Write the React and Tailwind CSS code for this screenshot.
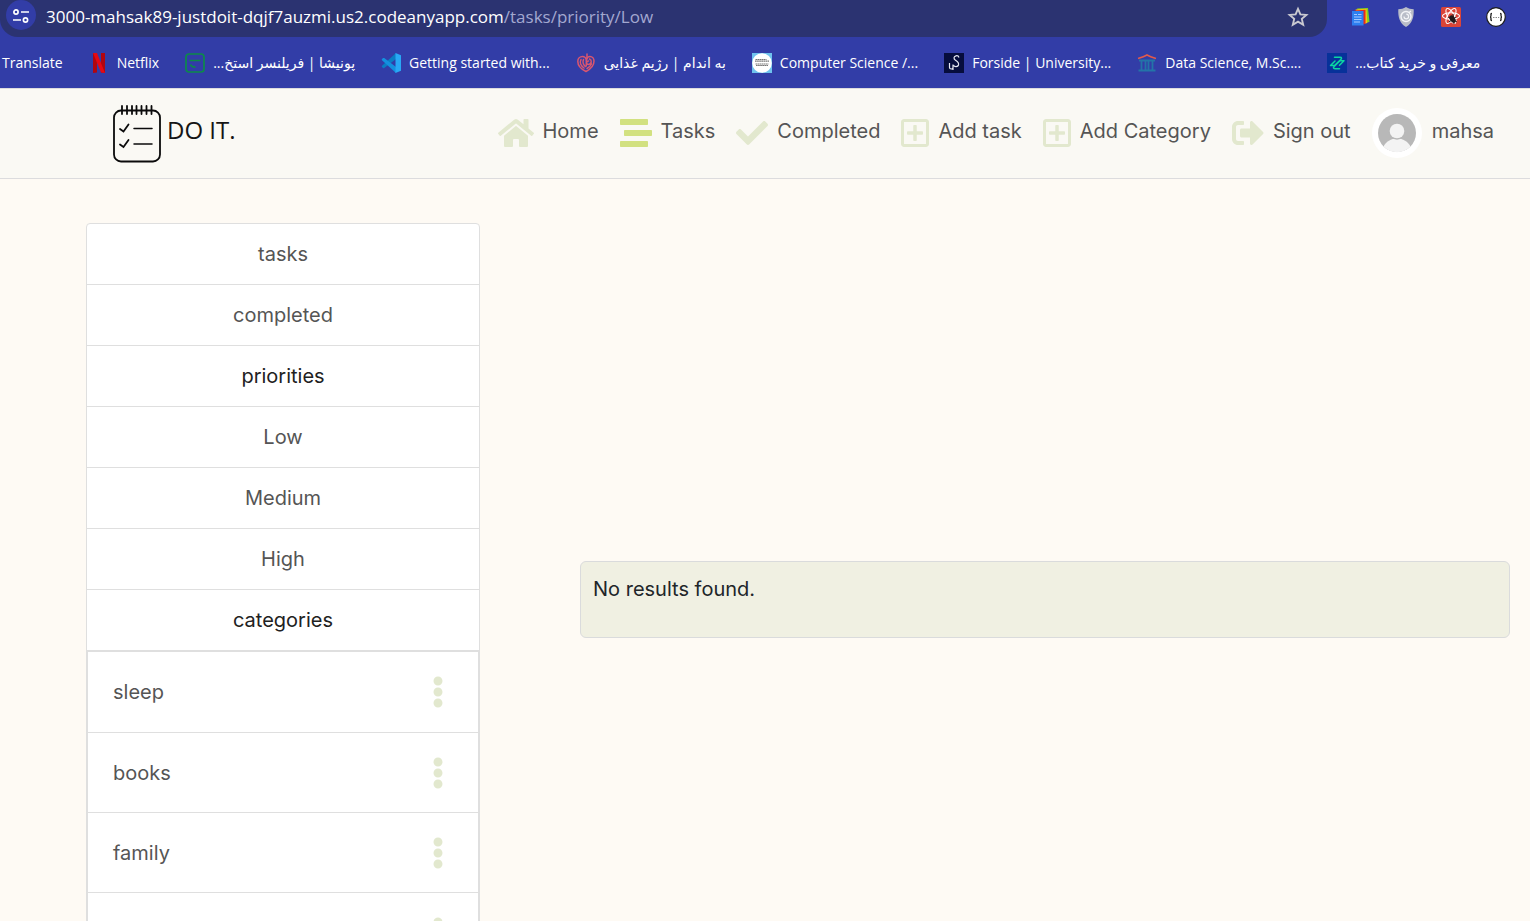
import React from "react";
import {
  FaHome,
  FaStream,
  FaCheck,
  FaRegPlusSquare,
  FaSignOutAlt,
  FaEllipsisV,
} from "react-icons/fa";

function NetflixIcon() {
  return (
    <svg viewBox="0 0 20 20" className="size-5 shrink-0" aria-hidden="true">
      <path d="M4 0h4v19.4L4 20zM12 0h4v20l-4-.6z" fill="#b1060f" />
      <path d="M4 0h4l8 20-4-.6z" fill="#e50914" />
    </svg>
  );
}

function PonishaIcon() {
  return (
    <svg viewBox="0 0 20 20" className="size-5 shrink-0" aria-hidden="true" fill="none" stroke="#0c8a4a" strokeWidth="1.7">
      <rect x="1" y="1" width="18" height="18" rx="3" />
      <path d="M4.5 7.5h11M5.500 11.500c.5 1.700 2 2.500 5 2.500" />
    </svg>
  );
}

function CodeIcon() {
  return (
    <svg viewBox="0 0 20 20" className="size-5 shrink-0" aria-hidden="true">
      <path d="M15 0 1 12.700c-.4.4-.4.9 0 1.200l1.100 1c.3.3.8.3 1.100 0L15 6z" fill="#0a7dc4" />
      <path d="M15 20 1 7.300c-.4-.4-.4-.9 0-1.200l1.100-1c.3-.3.8-.3 1.100 0L15 14z" fill="#1490df" />
      <path d="M14.500 0 20 2.300v15.400L14.500 20z" fill="#29a8f5" />
    </svg>
  );
}

function HeartIcon() {
  return (
    <svg viewBox="0 0 20 20" className="size-5 shrink-0" aria-hidden="true" fill="none" stroke="#d9566f" strokeWidth="1.5" strokeLinecap="round">
      <path d="M10 18.500C5 16 1.800 12.500 1.800 8.500 1.800 5.500 4 3.500 6.500 3.500c2 0 3.200 1 3.800 3 .7-2 2-3 3.700-3 2.300 0 4 2 4 4.600 0 4.400-3 7.900-8 10.400z" />
      <path d="M11 1v5M5 6.500c-1.500 3 0 6.500 3 8.500M7.500 6.500c-1 2.500-.5 5 1.800 7M13.500 6c2.500 1 2.500 5-1 5.500-2.500 0-2.500-3.500 0-3.500M10.300 7v6M15.500 11c-1 2-2.500 3.500-4.500 4.500" />
    </svg>
  );
}

function StudyIcon() {
  return (
    <svg viewBox="0 0 20 20" className="size-5 shrink-0" aria-hidden="true">
      <path d="M0 0h20v20H0z" fill="#6fc2ee" />
      <circle cx="10" cy="10" r="9.800" fill="#fff" />
      <path d="M3.500 6.500h11M3 8.200h14M3.500 11h13M4 12.500h12" stroke="#777" strokeWidth="1.200" strokeDasharray="1.700 .4" />
    </svg>
  );
}

function ForsideIcon() {
  return (
    <svg viewBox="0 0 20 20" className="size-5 shrink-0" aria-hidden="true">
      <path d="M0 0h20v20H0z" fill="#060d3c" />
      <path d="M15 4.500c-.5-1.500-1.800-2-3-1.700-2.500.6-2.600 3-.5 4.400 2.500 1.500 3.500 2.800 3 4.800-.6 2-4 2.200-5 .3M5.500 10v4.500c0 2 3.500 2 3.500 0V11.500v5.500" fill="none" stroke="#e8eaf3" strokeWidth="1.200" />
    </svg>
  );
}

function TempleIcon() {
  return (
    <svg viewBox="0 0 20 20" className="size-5 shrink-0" aria-hidden="true" fill="none">
      <path d="M1 5.500C4.500 4.500 7.500 3.500 10 2c2.500 1.500 5.500 2.500 9 3.500" stroke="#e25a4b" strokeWidth="1.600" />
      <path d="M2 7.500h16M4.500 8v9M8.500 8v9M11.500 8v9M15.500 8v9M1.500 17.500h17" stroke="#2374a8" strokeWidth="1.800" />
    </svg>
  );
}

function BookIcon() {
  return (
    <svg viewBox="0 0 20 20" className="size-5 shrink-0" aria-hidden="true">
      <path d="M0 0h20v20H0z" fill="#07319a" />
      <path d="M7.500 4.300h5.500c2 0 1.800 1.300.8 2.200L7.500 12.500H3.500l4.500-4.500M12.500 15.700H8c-2 0-1.800-1.300-.8-2.200l5.800-5.700H17l-4.500 4.500" fill="none" stroke="#0bd6a1" strokeWidth="1.500" strokeLinejoin="round" strokeLinecap="round" />
    </svg>
  );
}

const bookmarks = [
  { label: "Netflix", Icon: NetflixIcon },
  { label: "پونیشا | فریلنسر استخ...", Icon: PonishaIcon, rtl: true },
  { label: "Getting started with...", Icon: CodeIcon },
  { label: "به اندام | رژیم غذایی", Icon: HeartIcon, rtl: true },
  { label: "Computer Science /...", Icon: StudyIcon },
  { label: "Forside | University...", Icon: ForsideIcon },
  { label: "Data Science, M.Sc....", Icon: TempleIcon },
  { label: "معرفی و خرید کتاب...", Icon: BookIcon, rtl: true },
];

function Extensions() {
  return (
    <div className="flex h-[33px] shrink-0 items-center gap-[25px] pr-6 pl-6">
      <button type="button" aria-label="Documents">
        <svg viewBox="0 0 20 20" className="size-5">
          <path d="M6 1.500 17 1l1.500 14-5 1z" fill="#7ed321" />
          <path d="m4.500 2.500 11-.8.8 14.300-4 1z" fill="#fbc50b" />
          <path d="m3.500 3.500 11-.8v14l-4 1z" fill="#e32b22" />
          <path d="M1 4h11.500v14.500H1z" fill="#2d7ff0" />
          <path d="M3 7.500h3M7 7.500h3.500M3 10h7.500M3 12.500h7.500M3 15h6" stroke="#a3c8ff" strokeWidth="1.100" />
        </svg>
      </button>
      <button type="button" aria-label="Shield">
        <svg viewBox="0 0 20 20" className="size-5">
          <path d="M10 0c2.500 1.700 5 2 7.700 2.200C18 10 16.500 16 10 20 3.500 16 2 10 2.300 2.200 5 2 7.500 1.700 10 0z" fill="#b9bdc8" />
          <circle cx="10" cy="9.500" r="5" fill="none" stroke="#f3f4f7" strokeWidth="1.500" />
          <path d="M8 9.500a2.300 2.300 0 1 0 2.300-2.300M13 5.500l2-1.500" fill="none" stroke="#f3f4f7" strokeWidth="1.200" />
        </svg>
      </button>
      <button type="button" aria-label="React developer tools">
        <svg viewBox="0 0 20 20" className="size-5">
          <rect width="20" height="20" rx="1.500" fill="#db4437" />
          <g fill="none" stroke="#fff" strokeWidth="1.100">
            <ellipse cx="10" cy="9" rx="8.500" ry="3.300" />
            <ellipse cx="10" cy="9" rx="8.500" ry="3.300" transform="rotate(60 10 9)" />
            <ellipse cx="10" cy="9" rx="8.500" ry="3.300" transform="rotate(120 10 9)" />
          </g>
          <ellipse cx="11.500" cy="12" rx="2.500" ry="4" transform="rotate(-35 11.500 12)" fill="#221a1a" />
          <path d="m7 10 9 5M8 15l7-5M12 7l1 10" stroke="#221a1a" strokeWidth="1" />
        </svg>
      </button>
      <button type="button" aria-label="JSON viewer">
        <svg viewBox="0 0 20 20" className="size-5">
          <circle cx="10" cy="10" r="9.300" fill="#fff" stroke="#1c1c1c" strokeWidth="1.200" />
          <path d="M6 6.500c-1.500 0-1 1-1 2s-.3 1.500-1 1.500c.7 0 1 .5 1 1.500s-.5 2 1 2M14 6.500c1.500 0 1 1 1 2s.3 1.500 1 1.500c-.7 0-1 .5-1 1.500s.5 2-1 2" fill="none" stroke="#222" strokeWidth="1.300" />
          <path d="M7 10.500h1.500M9.500 10.500H11M12 10.500h1.200" stroke="#888" strokeWidth="1" />
        </svg>
      </button>
    </div>
  );
}

function BrowserBar() {
  return (
    <div className="h-[88px] shrink-0 bg-[#323da7] font-['Open_Sans','DejaVu_Sans',sans-serif] text-white">
      <div className="flex h-[37px] items-start">
        <div className="flex h-[37px] min-w-0 flex-1 items-start rounded-b-[18px] bg-[#2b3371] pr-[18px] pl-1.5">
          <button type="button" aria-label="Site information" className="flex size-[30px] shrink-0 items-center justify-center rounded-full bg-[#323da7]">
            <svg viewBox="0 0 16 16" className="mt-0.5 size-4" fill="none" stroke="#fff" strokeWidth="1.700">
              <circle cx="3" cy="4" r="2.100" />
              <path d="M8 4h8M0 12h8" />
              <circle cx="12.500" cy="12" r="2.100" />
            </svg>
          </button>
          <p className="ml-2.5 min-w-0 flex-1 truncate text-[17px] leading-[33px]">
            3000-mahsak89-justdoit-dqjf7auzmi.us2.codeanyapp.com
            <span className="text-[#a3a8d0]">/tasks/priority/Low</span>
          </p>
          <button type="button" aria-label="Bookmark this page" className="mt-1.5">
            <svg viewBox="0 0 22 22" className="size-[22px]" fill="none" stroke="#c9c9d0" strokeWidth="1.900">
              <path d="m11 2.800 2.400 5.600 6 .5-4.600 4 1.400 5.900L11 15.700l-5.200 3.100 1.400-5.900-4.600-4 6-.5z" />
            </svg>
          </button>
        </div>
        <Extensions />
      </div>
      <nav aria-label="Bookmarks" className="flex h-[51px] items-center gap-[26px] overflow-hidden pl-0.5 text-[14px] leading-5 whitespace-nowrap">
        <a href="#translate">Translate</a>
        {bookmarks.map(({ label, Icon, rtl }) => (
          <a key={label} href="#bookmark" className="flex items-center gap-2">
            <Icon />
            <span dir={rtl ? "rtl" : "ltr"}>{label}</span>
          </a>
        ))}
      </nav>
    </div>
  );
}

function Logo() {
  return (
    <svg viewBox="0 0 50 58" className="h-[58px] w-[50px]" fill="none" stroke="#0b0b0b" strokeLinecap="round" aria-hidden="true">
      <rect x="2" y="5.500" width="46" height="51" rx="7" strokeWidth="1.800" />
      <path d="M10 1v8M15 1v8M20 1v8M24.500 1v8M29.500 1v8M34.500 1v8M39.500 1v8" strokeWidth="1.800" />
      <path d="M22 23.500h18M22 39h18" strokeWidth="1.500" />
      <path d="m8 24 3.500 2.500 5-7M8 39.500l3.500 2.500 5-7" strokeWidth="1.800" />
    </svg>
  );
}

const links = [
  { label: "Home", Icon: FaHome, look: "h-8 w-9 text-[#e2e8ce]" },
  { label: "Tasks", Icon: FaStream, look: "h-8 w-8 text-[#d2e180]" },
  { label: "Completed", Icon: FaCheck, look: "h-8 w-8 text-[#e2e8ce]" },
  { label: "Add task", Icon: FaRegPlusSquare, look: "h-8 w-7 text-[#e2e8ce]" },
  { label: "Add Category", Icon: FaRegPlusSquare, look: "h-8 w-7 text-[#e2e8ce]" },
  { label: "Sign out", Icon: FaSignOutAlt, look: "h-8 w-8 text-[#e2e8ce]" },
];

function Header() {
  return (
    <header className="flex h-[91px] shrink-0 items-center justify-between border-t border-b border-[#dcdcde] bg-[#faf9f4] pr-9 pl-28">
      <a href="#home" className="flex items-center gap-[5px] font-['Open_Sans',sans-serif] text-[24px] leading-8 text-[#151515]">
        <Logo />
        <span className="pb-2">DO IT.</span>
      </a>
      <nav className="flex items-center gap-[21px] pb-0.5 text-[20px] leading-6 text-[#555]">
        {links.map(({ label, Icon, look }) => (
          <a key={label} href="#page" className="flex items-center gap-[9px]">
            <Icon className={look} />
            <span className="pb-1">{label}</span>
          </a>
        ))}
        <a href="#profile" className="flex items-center gap-2.5">
          <svg viewBox="0 0 50 50" className="size-[50px]" aria-hidden="true">
            <circle cx="25" cy="25" r="25" fill="#fff" />
            <circle cx="25" cy="25" r="19" fill="#b8b8b8" />
            <path d="M11.500 38.500C14 33.500 19 30.500 25 30.500s11 3 13.500 8A19 19 0 0 1 11.500 38.500z" fill="#f3f3f3" />
            <circle cx="25" cy="23.500" r="8.300" fill="#b8b8b8" />
            <circle cx="25" cy="23" r="7.300" fill="#f3f3f3" />
          </svg>
          <span className="pb-1">mahsa</span>
        </a>
      </nav>
    </header>
  );
}

const menu = [
  { label: "tasks" },
  { label: "completed" },
  { label: "priorities", heading: true },
  { label: "Low" },
  { label: "Medium" },
  { label: "High" },
  { label: "categories", heading: true },
];

const categories = ["sleep", "books", "family", ""];

function Sidebar() {
  return (
    <aside className="ml-[86px] w-[394px] shrink-0 self-start rounded-t border border-[#dfdfdf] bg-white text-[20px] leading-6 text-[#555]">
      <ul>
        {menu.map(({ label, heading }) => (
          <li key={label} className="flex h-[61px] items-center justify-center border-b border-[#dfdfdf]">
            {heading ? <h2 className="text-[#212121]">{label}</h2> : <a href="#list">{label}</a>}
          </li>
        ))}
      </ul>
      <ul className="border border-[#dfdfdf]">
        {categories.map((name, i) => (
          <li key={i} className="flex h-20 items-center justify-between border-t border-[#dfdfdf] pr-[34px] pl-[25px] first:border-t-0">
            <a href="#category">{name}</a>
            <button type="button" aria-label="Category options">
              <FaEllipsisV className="h-8 w-3 text-[#e2e8ce]" />
            </button>
          </li>
        ))}
      </ul>
    </aside>
  );
}

export default function App() {
  return (
    <div className="flex h-screen flex-col overflow-hidden bg-[#fefaf4] font-['Inter',sans-serif]">
      <BrowserBar />
      <Header />
      <div className="flex min-h-0 flex-1 overflow-hidden pt-11">
        <Sidebar />
        <main className="mr-5 ml-[100px] min-w-0 flex-1 pt-[338px]">
          <section className="rounded-md border border-[#dadbdc] bg-[#f0f0e2] px-3 pt-[15px] pb-9 text-[20px] leading-6 text-[#212529]">
            <p>No results found.</p>
          </section>
        </main>
      </div>
    </div>
  );
}
